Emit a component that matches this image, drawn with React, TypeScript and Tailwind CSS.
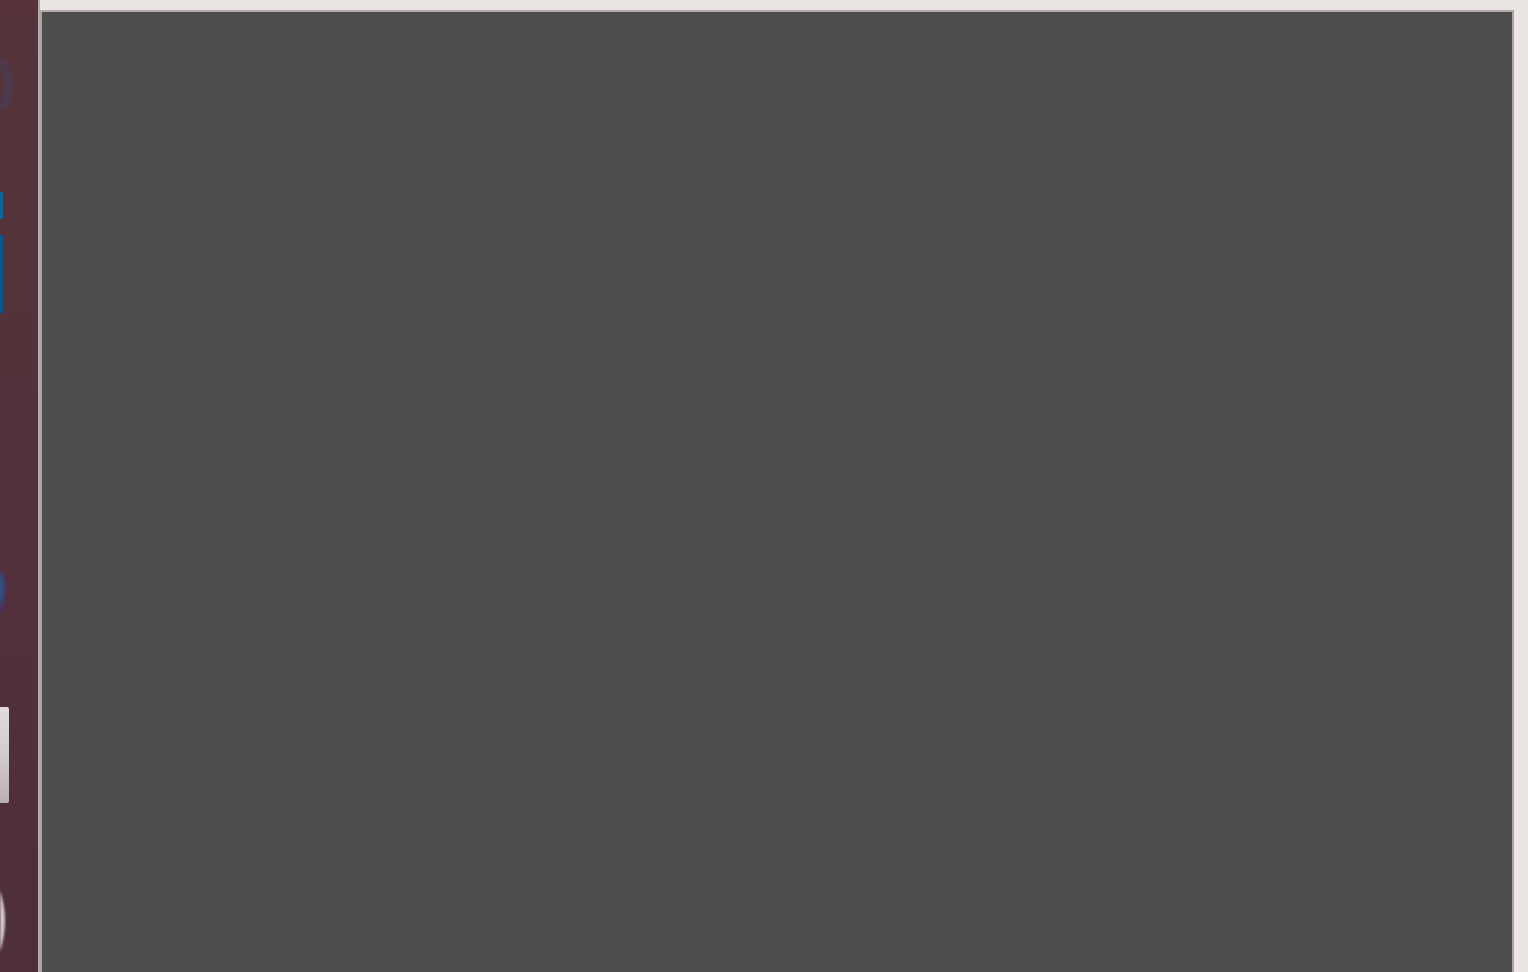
const SidebarIcons = () => {
  return (
    <div className="flex flex-col items-start">
      {/* ring */}
      <svg className="mt-[48px] block blur-[2px]" width="16" height="74" viewBox="0 0 16 74">
        <circle cx="-26" cy="37" r="35" fill="none" stroke="#4a3c5a" strokeWidth="6" />
      </svg>
      {/* blue bars */}
      <div className="mt-[70px] h-[27px] w-[3px] bg-[#0a6699] blur-[0.6px]" />
      <div className="mt-[16px] h-[78px] w-[3px] bg-[#07568c] blur-[0.6px]" />
      {/* blue dot */}
      <svg className="mt-[253px] block blur-[1.5px]" width="10" height="50" viewBox="0 0 10 50">
        <ellipse cx="-2" cy="25" rx="8" ry="24" fill="#4a3468" />
        <ellipse cx="-1" cy="22" rx="3.500" ry="17" fill="#0b6fa8" />
      </svg>
      {/* white tile */}
      <div className="mt-[91px] h-[96px] w-[9px] rounded-r-[2px] bg-gradient-to-b from-[#e2dbdc] via-[#d2cbcd] to-[#b9b0b3] blur-[0.7px]" />
      {/* white curve */}
      <svg className="mt-[87px] block blur-[0.8px]" width="8" height="62" viewBox="0 0 8 62">
        <path d="M0 0C3 10 5 20 5 30C5 42 3 52 0 62Z" fill="#d3cbcf" />
      </svg>
    </div>
  );
};

export default function App() {
  return (
    <div className="flex h-[972px] w-[1528px] overflow-hidden bg-[#ebe6e3]">
      <aside className="h-full w-[40px] shrink-0 overflow-hidden border-r-2 border-[#b5a9ad] bg-gradient-to-b from-[#56343a] to-[#4e2e3b]">
        <SidebarIcons />
      </aside>
      <div className="flex h-full flex-1 flex-col pt-[10px] pr-[14px]">
        <main className="flex-1 border-x-2 border-t-2 border-x-[#aaa6a6] border-t-[#b0abaa] bg-[#4d4d4d]" />
      </div>
    </div>
  );
}
